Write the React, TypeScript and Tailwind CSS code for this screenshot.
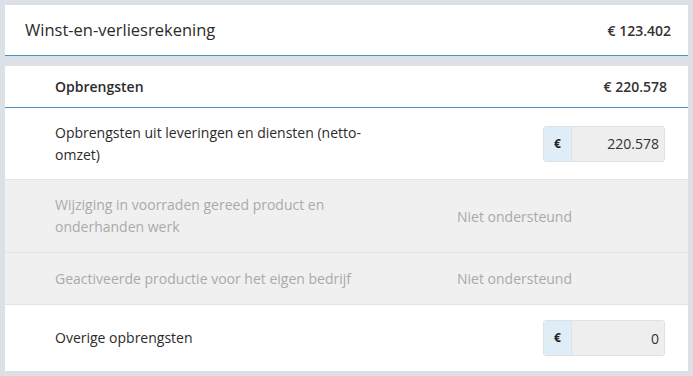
import React from 'react';

interface Row {
  label: string;
  value?: string;
  disabled?: boolean;
  height: string;
}

const rows: Row[] = [
  { label: 'Opbrengsten uit leveringen en diensten (netto-omzet)', value: '220.578', height: 'h-[72px]' },
  { label: 'Wijziging in voorraden gereed product en onderhanden werk', disabled: true, height: 'h-[73px]' },
  { label: 'Geactiveerde productie voor het eigen bedrijf', disabled: true, height: 'h-[52px]' },
  { label: 'Overige opbrengsten', value: '0', height: 'h-[66px]' },
];

function MoneyInput({ value }: { value: string }) {
  return (
    <div className="flex h-9 w-[122px] overflow-hidden rounded-[3px] border border-[#dde2e8]">
      <div className="flex w-7 items-center justify-center border-r border-[#dde2e8] bg-[#deedf6] text-[12px] font-bold text-[#222]">
        €
      </div>
      <div className="flex flex-1 items-center justify-end bg-[#eeeeee] pr-[5px] text-[14px] text-[#333]">
        {value}
      </div>
    </div>
  );
}

export default function App() {
  return (
    <div
      className="min-h-[376px] w-full bg-[#dce1e8] p-[5px]"
      style={{ fontFamily: '"Open Sans", sans-serif' }}
    >
      {/* page header */}
      <div className="flex h-[51px] items-center justify-between border-b border-[#4a91c2] bg-white pl-5 pr-[17px]">
        <span className="text-[16.5px] font-medium text-[#2b2b2b]">Winst-en-verliesrekening</span>
        <span className="text-[14px] font-semibold text-[#333]">€ 123.402</span>
      </div>

      <div className="mt-[10px] bg-white">
        <div className="flex h-[42px] items-center justify-between border-b border-[#4a91c2] pl-[50px] pr-[21px]">
          <span className="text-[14px] font-semibold text-[#2b2b2b]">Opbrengsten</span>
          <span className="text-[14px] font-semibold text-[#333]">€ 220.578</span>
        </div>

        {rows.map((row, i) => (
          <div
            key={row.label}
            className={`flex items-center pl-[50px] pr-[23px] ${row.height} ${
              i < rows.length - 1 ? 'border-b border-[#e1e5ea]' : ''
            } ${row.disabled ? 'bg-[#f0f0f0]' : 'bg-white'}`}
          >
            <div
              className={`w-[320px] text-[14px] leading-[22px] ${
                row.disabled ? 'text-[#aaaaaa]' : 'text-[#2b2b2b]'
              }`}
            >
              {row.label}
            </div>
            <div className="flex flex-1 justify-end">
              {row.disabled ? (
                <span className="mr-auto pl-[82px] text-[14px] text-[#aaaaaa]">Niet ondersteund</span>
              ) : (
                <MoneyInput value={row.value ?? ''} />
              )}
            </div>
          </div>
        ))}
      </div>
    </div>
  );
}
